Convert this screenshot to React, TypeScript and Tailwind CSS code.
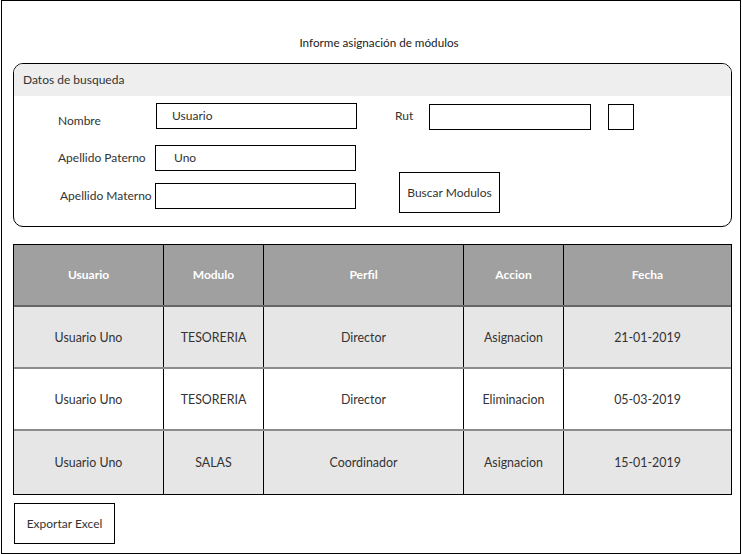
import React from "react";

const rows = [
  { u: "Usuario Uno", m: "TESORERIA", p: "Director", a: "Asignacion", f: "21-01-2019", bg: "bg-[#e6e6e6]" },
  { u: "Usuario Uno", m: "TESORERIA", p: "Director", a: "Eliminacion", f: "05-03-2019", bg: "bg-white" },
  { u: "Usuario Uno", m: "SALAS", p: "Coordinador", a: "Asignacion", f: "15-01-2019", bg: "bg-[#e6e6e6]" },
];

const widths = ["w-[150px]", "w-[100px]", "w-[200px]", "w-[100px]", "w-[167px]"];

export default function App() {
  return (
    <div className="w-[742px] h-[554px] bg-white text-[#333333] text-[12px]" style={{ fontFamily: "Lato, 'Liberation Sans', sans-serif" }}>
      <div className="ml-[1px] w-[740px] h-[554px] border border-black flex flex-col">
        <div className="pt-[33px] h-[62px] leading-[16px] text-center pl-[16px] text-[#222] text-[11.7px]">Informe asignación de módulos</div>

        <div className="ml-[11px] w-[719px] h-[164px] border border-black rounded-[10px] overflow-hidden flex flex-col">
          <div className="h-[32px] bg-[#eeeeee] flex items-center pl-[9px]">Datos de busqueda</div>
          <div className="flex">
            <div className="flex flex-col pt-[7px]">
              <div className="flex h-[26px]">
                <div className="w-[142px] pl-[44px] pt-[10px] leading-[16px]">Nombre</div>
                <div className="w-[201px] h-[26px] border border-black pl-[15px] flex items-center">Usuario</div>
              </div>
              <div className="flex h-[26px] mt-[16px]">
                <div className="w-[141px] pl-[44px] flex items-center">Apellido Paterno</div>
                <div className="w-[201px] h-[26px] border border-black pl-[18px] flex items-center">Uno</div>
              </div>
              <div className="flex h-[26px] mt-[12px]">
                <div className="w-[141px] pl-[46px] flex items-center">Apellido Materno</div>
                <div className="w-[201px] h-[26px] border border-black"></div>
              </div>
            </div>
            <div className="flex flex-col pt-[8px]">
              <div className="flex h-[26px] items-center">
                <div className="w-[72px] pl-[38px] leading-[16px] -mt-[2px]">Rut</div>
                <div className="w-[162px] h-[26px] border border-black"></div>
                <div className="ml-[17px] w-[26px] h-[26px] border border-black"></div>
              </div>
              <div className="ml-[42px] mt-[42px] w-[101px] h-[41px] border border-black flex items-center justify-center">Buscar Modulos</div>
            </div>
          </div>
        </div>

        <div className="ml-[11px] mt-[17px] w-[719px] border border-black flex flex-col">
          <div className="flex h-[62px] bg-[#a0a0a0] border-b-2 border-[#666666] text-white font-bold">
            {["Usuario", "Modulo", "Perfil", "Accion", "Fecha"].map((h, i) => (
              <div key={h} className={`${widths[i]} flex items-center justify-center ${i < 4 ? "border-r border-black" : ""}`}>{h}</div>
            ))}
          </div>
          {rows.map((r, ri) => (
            <div key={ri} className={`flex text-[12.4px] ${ri < 2 ? "h-[62px] border-b-2 border-[#8c8c8c]" : "h-[63px]"} ${r.bg}`}>
              {[r.u, r.m, r.p, r.a, r.f].map((c, i) => (
                <div key={i} className={`${widths[i]} flex items-center justify-center pt-[2px] ${i < 4 ? "border-r border-black" : ""}`}>{c}</div>
              ))}
            </div>
          ))}
        </div>

        <div className="ml-[12px] mt-[8px] w-[101px] h-[41px] border border-black flex items-center justify-center">Exportar Excel</div>
      </div>
    </div>
  );
}
